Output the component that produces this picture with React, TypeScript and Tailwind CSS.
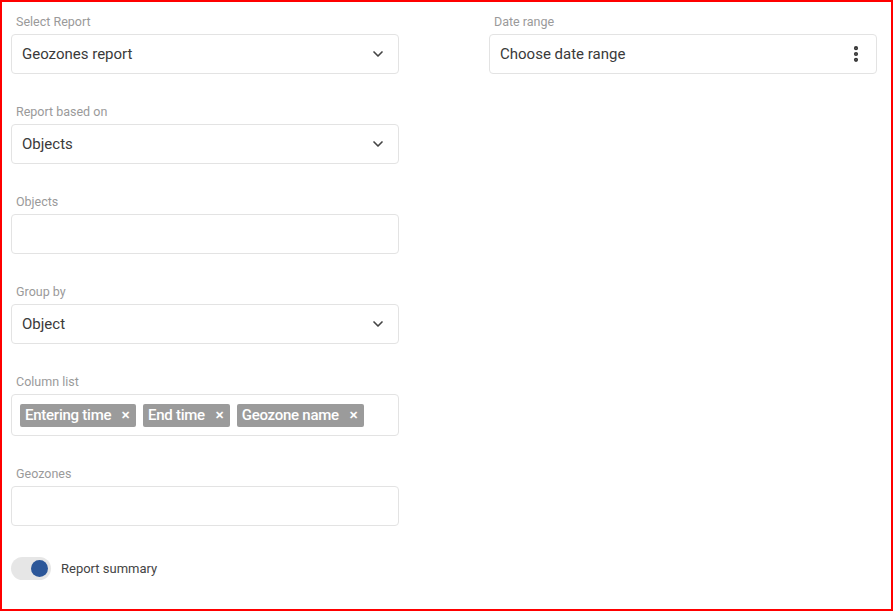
import { ChevronDown, EllipsisVertical } from "lucide-react";

function Label({ children }: { children: React.ReactNode }) {
  return <div className="h-[19px] pl-[5px] text-[12.5px] leading-[19px] text-[#9a9a9a]">{children}</div>;
}

function Select({ value }: { value: string }) {
  return (
    <div className="mt-[3px] flex h-[40px] items-center justify-between rounded-[4px] border border-[#e3e3e3] bg-white pl-[10px] pr-[12px]">
      <span className="text-[15px] text-[#3a3a3a]">{value}</span>
      <ChevronDown size={16} strokeWidth={2.5} className="text-[#444]" />
    </div>
  );
}

function Empty() {
  return <div className="mt-[3px] h-[40px] rounded-[4px] border border-[#e3e3e3] bg-white" />;
}

function Chip({ text }: { text: string }) {
  return (
    <span className="flex h-[23px] items-center gap-[10px] rounded-[2px] bg-[#9b9b9b] pl-[5px] pr-[6px] text-[15px] font-medium tracking-[-0.25px] text-white">
      {text}
      <span className="text-[11px] font-bold leading-none">✕</span>
    </span>
  );
}

export default function App() {
  return (
    <div className="h-[612px] w-[893px] bg-white font-['Roboto',sans-serif]">
      <div className="flex h-[611px] w-[893px] border-2 border-[#ff0000] pl-[9px] pt-[10px]">
        <div className="flex w-[388px] flex-col">
          <Label>Select Report</Label>
          <Select value="Geozones report" />
          <div className="h-[28px]" />
          <Label>Report based on</Label>
          <Select value="Objects" />
          <div className="h-[28px]" />
          <Label>Objects</Label>
          <Empty />
          <div className="h-[28px]" />
          <Label>Group by</Label>
          <Select value="Object" />
          <div className="h-[28px]" />
          <Label>Column list</Label>
          <div className="mt-[3px] flex h-[42px] items-center gap-[7px] rounded-[4px] border border-[#e3e3e3] bg-white px-[8px]">
            <Chip text="Entering time" />
            <Chip text="End time" />
            <Chip text="Geozone name" />
          </div>
          <div className="h-[28px]" />
          <Label>Geozones</Label>
          <Empty />
          <div className="mt-[31px] flex items-center gap-[10px]">
            <div className="flex h-[23px] w-[40px] items-center justify-end rounded-full bg-[#e6e6e6] pr-[3px]">
              <div className="h-[17px] w-[17px] rounded-full bg-[#2c5799]" />
            </div>
            <span className="text-[13px] text-[#444]">Report summary</span>
          </div>
        </div>
        <div className="ml-[90px] flex w-[388px] flex-col">
          <Label>Date range</Label>
          <div className="mt-[3px] flex h-[40px] items-center justify-between rounded-[4px] border border-[#e3e3e3] bg-white pl-[10px] pr-[10px]">
            <span className="text-[15px] text-[#3a3a3a]">Choose date range</span>
            <EllipsisVertical size={20} strokeWidth={3} className="text-[#333]" />
          </div>
        </div>
      </div>
    </div>
  );
}
